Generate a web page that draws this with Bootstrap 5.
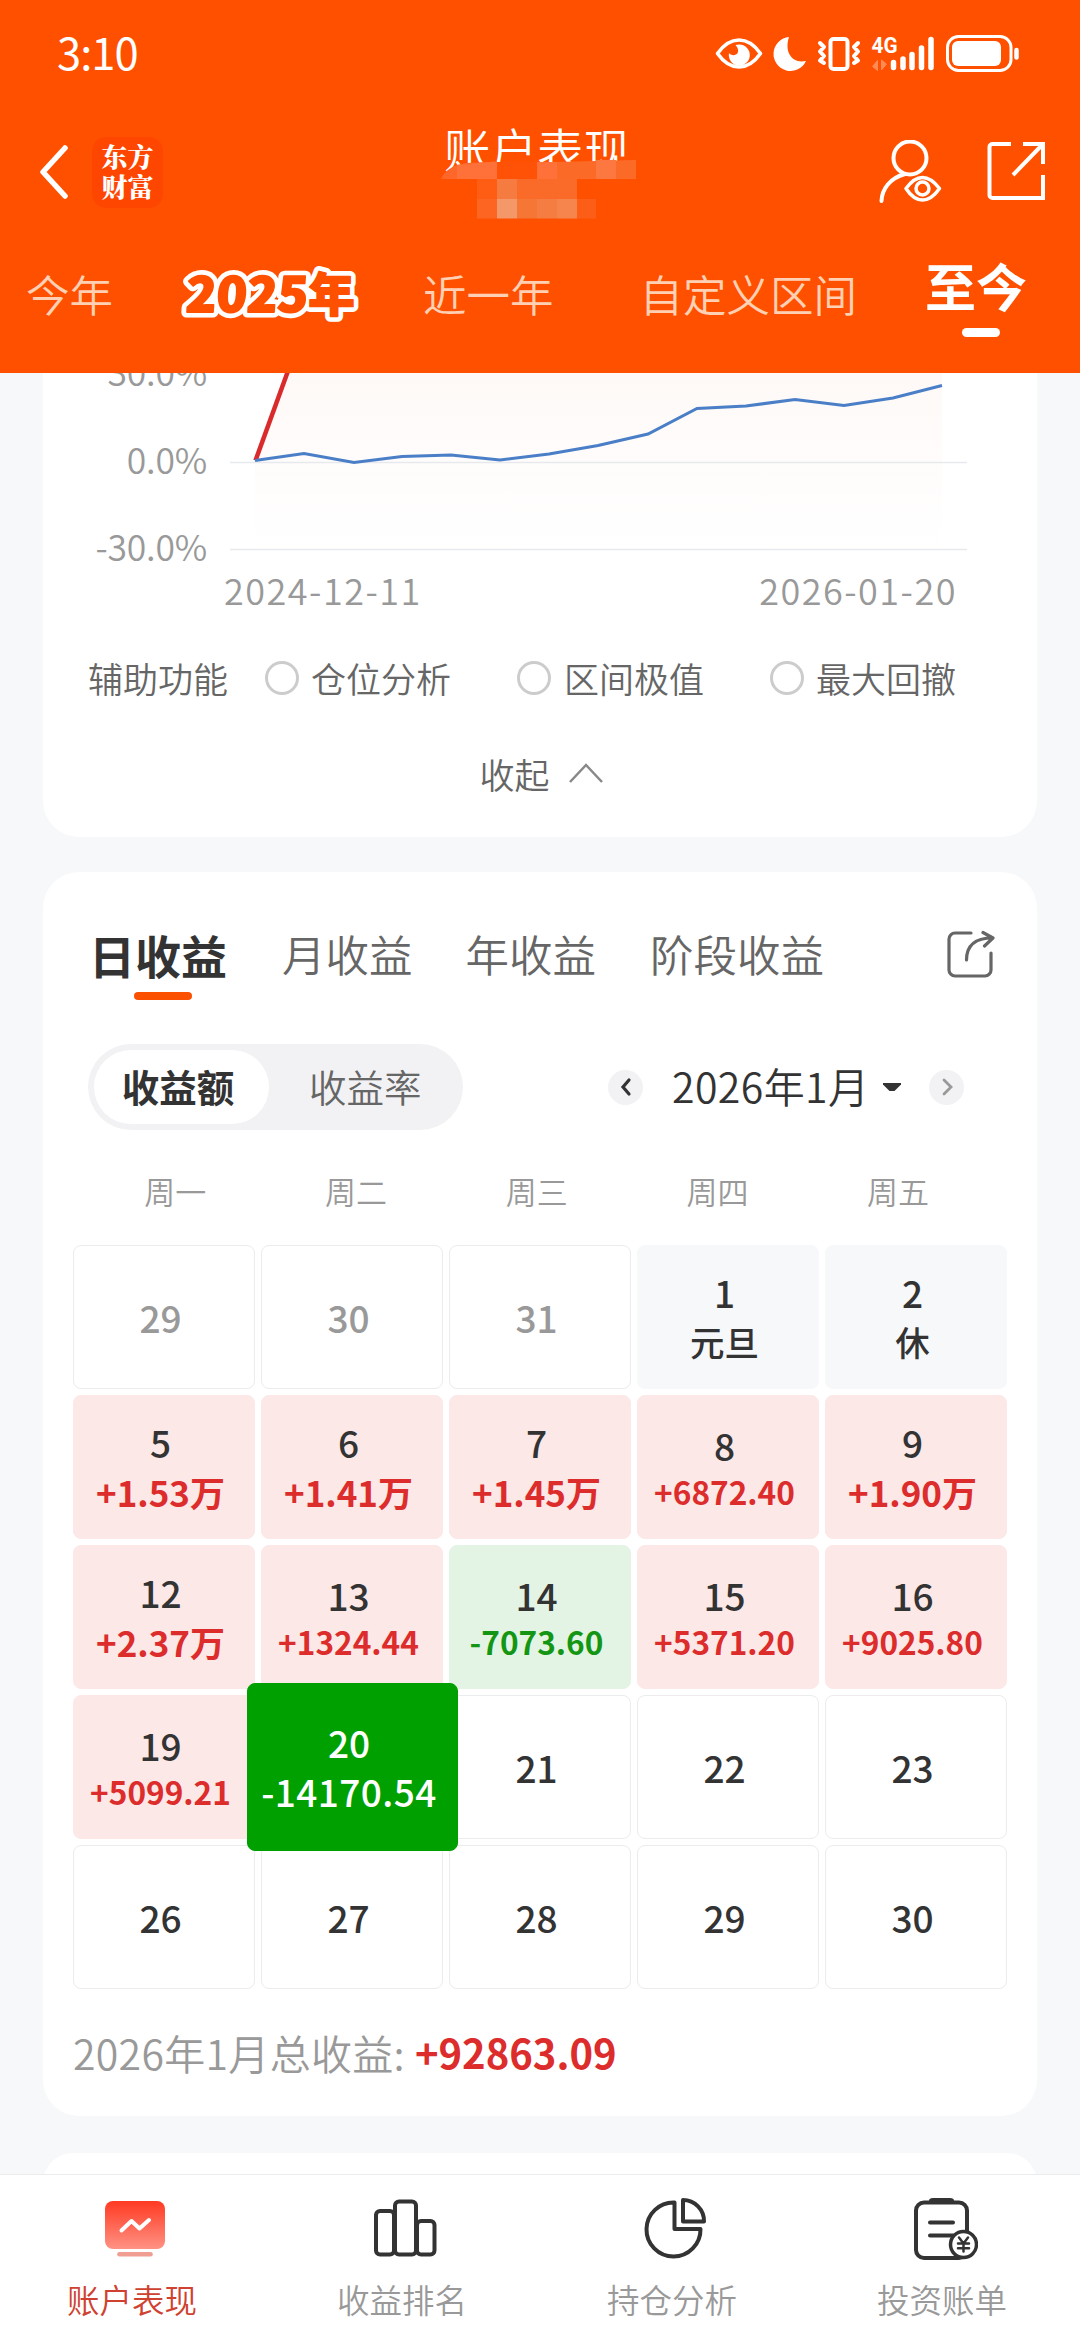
<!DOCTYPE html>
<html lang="zh-CN">
<head>
<meta charset="utf-8">
<meta name="viewport" content="width=device-width, initial-scale=1">
<title>账户表现</title>
<link rel="stylesheet" href="https://cdn.jsdelivr.net/npm/bootstrap@5.3.0/dist/css/bootstrap.min.css">
<script src="https://cdn.jsdelivr.net/npm/bootstrap@5.3.0/dist/js/bootstrap.bundle.min.js"></script>
<style>
html, body { height: 2340px; overflow: hidden; }
body { background: #f7f8fa; color: #333; font-family: "Noto Sans CJK SC", "Noto Sans", sans-serif; font-weight: 350; width: 1080px; }
svg { display: block; flex: none; }
.lh-tight { line-height: 1; white-space: nowrap; }
.app-head { height: 373px; background: #ff5000; z-index: 5; }
.status-row { height: 108px; padding: 0 61px 0 57px; }
.clock { font-size: 43.5px; font-weight: 400; letter-spacing: -1px; margin-bottom: 5px; }
.title-row { height: 128px; padding: 0 35px 0 40px; }
.brand-tile { width: 71px; height: 71px; border-radius: 14px; background: #ff4600; margin-left: 24px; color: #fff; font: 900 26px/30px "Noto Serif CJK SC", "Noto Sans CJK SC", sans-serif; padding-bottom: 2px; }
.page-title { font-size: 46.5px; margin-bottom: 48px; padding-left: 34px; }
.mosaic { left: 441px; top: 160px; }
.range-row { height: 118px; padding: 0 0 3px 26px; font-size: 43.5px; color: #ffd0b4; }
.outlined { overflow: visible; }
.range-now { font-size: 51px; font-weight: 700; color: #fff; margin-left: 68px; margin-bottom: 17px; }
.range-now::after { content: ""; width: 38px; height: 9px; border-radius: 5px; background: #fff; position: absolute; left: 37px; bottom: -26px; }
.panel { width: 994px; margin-left: 43px; background: #fff; border-radius: 36px; }
.chart-panel { height: 464px; border-radius: 0 0 36px 36px; overflow: hidden; }
.plot { height: 197px; }
.y-axis { width: 164px; font-size: 35.5px; color: #999; }
.y-axis span { display: block; height: 87.500px; line-height: 87.500px; letter-spacing: -.2px; }
.y-axis span:first-child { margin-top: -46px; }
.dates { height: 37px; padding: 0 80px 0 181px; font-size: 36px; color: #999; letter-spacing: 1.500px; }
.aux { margin-top: 46px; height: 50px; padding-left: 45px; font-size: 35px; color: #666; }
.aux span { padding-bottom: 2px; }
.ring { width: 34px; height: 34px; border: 3px solid #ccc; border-radius: 50%; }
.fold { margin-top: 45px; height: 50px; font-size: 35px; color: #666; padding-left: 3px; }
.calendar-panel { margin-top: 35px; height: 1244px; }
.kind-row { height: 130px; padding: 34px 42px 0 46px; font-size: 43.5px; color: #666; }
.kind-day { font-size: 46px; font-weight: 700; color: #333; width: 138px; }
.kind-day::after { content: ""; position: absolute; left: 45px; bottom: -23px; width: 58px; height: 8px; border-radius: 4px; background: #fa5000; }
.filter-row { margin-top: 42px; height: 86px; padding-left: 45px; }
.switch-pill { width: 375px; height: 86px; border-radius: 43px; background: #f2f2f4; padding: 6px; font-size: 37.5px; color: #666; }
.switch-pill span { padding-bottom: 3px; }
.switch-on { width: 175px; height: 74px; border-radius: 37px; background: #fff; color: #333; font-weight: 700; padding-right: 7px; }
.step { width: 35px; height: 35px; border-radius: 50%; background: #f2f2f4; }
.month-label { font-size: 41px; color: #333; width: 199px; margin-left: 29px; letter-spacing: .4px; padding-bottom: 3px; }
.week-row { height: 115px; padding: 6px 30px 0 42px; font-size: 31px; color: #999; }
.week-row span { width: 180.7px; text-align: center; }
.day-grid { display: grid; grid-template-columns: repeat(5, 182px); grid-auto-rows: 144px; gap: 6px; padding-left: 30px; }
.day { border: 1px solid #ececec; border-radius: 8px; font-size: 37px; font-weight: 500; line-height: 49px; padding: 0 7px 0 0; white-space: nowrap; }
.faded { color: #999; }
.rest { background: #f7f8fa; border-color: #f7f8fa; }
.rest b { font-size: 34.5px; font-weight: 500; }
.up { background: #fce8e7; border-color: #fce8e7; }
.down { background: #e3f4e4; border-color: #e3f4e4; }
.up b { color: #dc2c2c; font-size: 35px; font-weight: 700; }
.down b { color: #149614; }
.day .fine { font-size: 31.6px; line-height: 43px; font-weight: 700; }
.picked { margin: -12px -15px -12px -14px; background: #00a000; border-color: #00a000; color: #fff; z-index: 2; }
.picked b { font-weight: 500; letter-spacing: .4px; }
.total { height: 127px; padding: 0 0 1px 30px; font-size: 41px; color: #999; letter-spacing: .3px; }
.total b { font-weight: 700; font-size: 40px; letter-spacing: 0; color: #dc2c2c; margin-left: 10px; }
.next-panel { margin-top: 37px; height: 60px; }
.tab-bar { height: 166px; bottom: 0; left: 0; background: #fff; border-top: 1px solid #ececec; z-index: 5; font-size: 32.5px; color: #999; }
.tab-bar .tab { width: 270px; padding-top: 22px; }
.tab span { margin-top: 16px; padding-right: 6px; height: 40px; line-height: 40px; }
.tab-on { color: #cf4130; }
</style>
</head>
<body>
<header class="app-head position-relative">
  <div class="status-row d-flex align-items-center justify-content-between text-white">
    <div class="clock lh-tight">3:10</div>
    <svg class="outlined" width="306" height="40" viewBox="712 34 306 40" fill="none" stroke="#fff">
      <path d="M716.500 53.500Q726 40 738 40t21.500 13.500Q750 67 738 67t-21.500-13.500z" stroke-width="3.600" stroke-linejoin="round"/>
      <path d="M738 44.500a10.500 10.500 0 1 1-10 8.500c2 3 8 3 9-1 .8-3-1-5-2.500-7z" fill="#fff" stroke="none"/>
      <path d="M788 37a17 17 0 1 0 17 24c-14 3-22-9-17-24z" fill="#fff" stroke="none"/>
      <rect x="829.500" y="39" width="17" height="30" rx="3" stroke-width="4"/>
      <path d="M819 43l4 4-4 4.500 4 4.500-4 4.500 4 2.500M857 43l-4 4 4 4.500-4 4.500 4 4.500-4 2.500" stroke-width="4" stroke-linejoin="round" stroke-linecap="round"/>
      <text x="870.500" y="53" font-family="Roboto, sans-serif" font-size="22.500" font-weight="700" fill="#fff" stroke="none" textLength="26" lengthAdjust="spacingAndGlyphs">4G</text>
      <path d="M876.500 70.500v-10l-5 6zM880.500 60v10l5-6z" fill="#ff8a55" stroke="#ff8a55" stroke-width="1"/>
      <path d="M892.500 62.500v5M902 59v8.500M911 54.500v13M920.500 48v19.500M930 39.500v28" stroke-width="5.500" stroke-linecap="round"/>
      <rect x="946.500" y="36.500" width="63.500" height="34" rx="11" stroke-width="3"/>
      <rect x="951" y="41" width="49" height="25" rx="6" fill="#fff" stroke="none"/>
      <path d="M1015.500 50v7.500" stroke-width="4.500" stroke-linecap="round"/>
    </svg>
  </div>
  <div class="title-row d-flex align-items-center justify-content-between text-white">
    <div class="d-flex align-items-center">
      <svg width="28" height="54" viewBox="0 0 28 54" fill="none" stroke="#fff" stroke-width="5.500" stroke-linecap="round" stroke-linejoin="round"><path d="M25 3L3 27l22 24"/></svg>
      <div class="brand-tile text-center d-flex flex-column justify-content-center"><span>东方</span><span>财富</span></div>
    </div>
    <div class="page-title lh-tight">账户表现</div>
    <svg width="168" height="64" viewBox="876 140 168 64" fill="none" stroke="#fff" stroke-width="4">
      <circle cx="909" cy="158" r="16.500"/>
      <path d="M904 174c-15 4-23 15-23.500 27" stroke-linecap="round"/>
      <path d="M905 188.500q8-11 16.500-11t17 11q-8 11.500-17 11.500t-16.500-11.500z" stroke-width="3.500" stroke-linejoin="round"/>
      <circle cx="921.500" cy="188.500" r="6.500" stroke-width="3.500"/>
      <path d="M1010 144h-18.500a3 3 0 0 0-3 3v48a3 3 0 0 0 3 3H1042v-23M1022 144h20v20M1042 144l-30 31"/>
    </svg>
  </div>
  <svg class="mosaic position-absolute" width="196" height="62" viewBox="441 160 196 62">
    <path d="M441 179c4-9 12-14 25-16l31-1.500v17.500z" fill="#ff662a"/>
    <path d="M457 165l40-3.500v17.500h-40z" fill="#ff7138"/>
    <rect x="497" y="162" width="40" height="17" fill="#ff5206"/>
    <path d="M537 162.500l99-2.500v19h-99z" fill="#fc6a28"/>
    <rect x="537" y="162" width="20" height="17" fill="#ff7138"/><rect x="596" y="160" width="20" height="19" fill="#fc7840"/>
    <rect x="477" y="179" width="20" height="20" fill="#ff5c14"/><rect x="497" y="179" width="20" height="20" fill="#f57b40"/><rect x="517" y="179" width="60" height="20" fill="#fa6a28"/>
    <rect x="477" y="199" width="20" height="19.500" fill="#fc6622"/><rect x="497" y="199" width="20" height="19.500" fill="#f49769"/><rect x="517" y="199" width="20" height="19.500" fill="#f67636"/><rect x="537" y="199" width="20" height="19.500" fill="#f57d41"/><rect x="557" y="199" width="20" height="19.500" fill="#f5854d"/><rect x="577" y="199" width="19" height="19.500" fill="#fc5e18"/>
  </svg>
  <nav class="range-row d-flex align-items-center lh-tight">
    <span>今年</span>
    <svg class="outlined" style="margin-left:67px" width="180" height="60" viewBox="180 264 180 60" font-family="Noto Sans CJK SC, sans-serif" font-weight="900" font-size="48" stroke-linejoin="round">
      <g fill="#fff" stroke="#fff" stroke-width="11"><text transform="translate(185 312) skewX(-4)" textLength="122" lengthAdjust="spacingAndGlyphs">2025</text><text x="308.500" y="311" font-size="46">年</text></g>
      <g fill="#ff5000" stroke="#ff5000" stroke-width="1.800" aria-hidden="true"><text transform="translate(185 312) skewX(-4)" textLength="122" lengthAdjust="spacingAndGlyphs">2025</text><text x="308.500" y="311" font-size="46">年</text></g>
    </svg>
    <span style="margin-left:63px">近一年</span>
    <span style="margin-left:86px">自定义区间</span>
    <span class="range-now position-relative">至今</span>
  </nav>
</header>

<main>
  <section class="panel chart-panel">
    <div class="plot d-flex">
      <div class="y-axis text-end"><span>30.0%</span><span>0.0%</span><span>-30.0%</span></div>
      <svg width="794" height="197" viewBox="207 373 794 197" fill="none">
        <defs><linearGradient id="fade" x1="0" y1="0" x2="0" y2="1"><stop offset="0" stop-color="#fef9f7"/><stop offset="1" stop-color="#fff"/></linearGradient></defs>
        <path d="M255 460L288 373H942V549H255z" fill="url(#fade)"/>
        <path d="M230 462.500H967M230 549.500H967" stroke="#e8e9ed" stroke-width="1.500"/>
        <path d="M255.500 460.500L288 371" stroke="#d92b2b" stroke-width="4.500"/>
        <path d="M255 460.500L304 453.500 354 462.500 402 456.500 451 455 500 460 549 454 598 445.500 648 434 697 408.500 746 406 795 399.500 844 405.500 893 398 942 385.500" stroke="#4a7fc8" stroke-width="3"/>
      </svg>
    </div>
    <div class="dates d-flex align-items-center justify-content-between lh-tight"><span>2024-12-11</span><span>2026-01-20</span></div>
    <div class="aux d-flex align-items-center lh-tight">
      <span>辅助功能</span>
      <i class="ring" style="margin-left:37px"></i><span style="margin-left:12px">仓位分析</span>
      <i class="ring" style="margin-left:66px"></i><span style="margin-left:13px">区间极值</span>
      <i class="ring" style="margin-left:66px"></i><span style="margin-left:12px">最大回撤</span>
    </div>
    <div class="fold d-flex align-items-center justify-content-center lh-tight"><span>收起</span>
      <svg style="margin-left:18px" width="36" height="22" viewBox="0 0 36 22" fill="none" stroke="#888" stroke-width="2.500"><path d="M2 20L18 3l16 17"/></svg>
    </div>
  </section>

  <section class="panel calendar-panel">
    <div class="kind-row d-flex align-items-center lh-tight">
      <span class="kind-day position-relative">日收益</span>
      <span style="margin-left:55px">月收益</span>
      <span style="margin-left:53px">年收益</span>
      <span style="margin-left:54px">阶段收益</span>
      <svg class="ms-auto" width="48" height="48" viewBox="945 931 48 48" fill="none" stroke="#666" stroke-width="3.200" stroke-linecap="round" stroke-linejoin="round"><path d="M969 934h-16a6 6 0 0 0-6 6v31a6 6 0 0 0 6 6h30a6 6 0 0 0 6-6v-17M964.500 961c0-14 8-22 26-22M981 933.500l10 5.500-8.500 8"/></svg>
    </div>
    <div class="filter-row d-flex align-items-center lh-tight">
      <div class="switch-pill d-flex align-items-center">
        <div class="switch-on d-flex align-items-center justify-content-center"><span>收益额</span></div>
        <span style="margin-left:40px">收益率</span>
      </div>
      <div class="step d-flex align-items-center justify-content-center" style="margin-left:145px"><svg width="12" height="20" viewBox="0 0 12 20" fill="none" stroke="#333" stroke-width="3.200" stroke-linecap="round"><path d="M9 3L3 10l6 7"/></svg></div>
      <span class="month-label">2026年1月</span>
      <svg style="margin-left:12px" width="18" height="8" viewBox="0 0 18 8"><path d="M0 0h18v1.500L11.500 8h-5L0 1.500z" fill="#333"/></svg>
      <div class="step d-flex align-items-center justify-content-center" style="margin-left:28px"><svg width="12" height="20" viewBox="0 0 12 20" fill="none" stroke="#999" stroke-width="2.800" stroke-linecap="round"><path d="M3 3l7 7-7 7"/></svg></div>
    </div>
    <div class="week-row d-flex align-items-center lh-tight"><span>周一</span><span>周二</span><span>周三</span><span>周四</span><span>周五</span></div>
    <div class="day-grid">
      <div class="day faded d-flex flex-column align-items-center justify-content-center">29</div>
      <div class="day faded d-flex flex-column align-items-center justify-content-center">30</div>
      <div class="day faded d-flex flex-column align-items-center justify-content-center">31</div>
      <div class="day rest d-flex flex-column align-items-center justify-content-center">1<b>元旦</b></div>
      <div class="day rest d-flex flex-column align-items-center justify-content-center">2<b>休</b></div>
      <div class="day up d-flex flex-column align-items-center justify-content-center">5<b>+1.53万</b></div>
      <div class="day up d-flex flex-column align-items-center justify-content-center">6<b>+1.41万</b></div>
      <div class="day up d-flex flex-column align-items-center justify-content-center">7<b>+1.45万</b></div>
      <div class="day up d-flex flex-column align-items-center justify-content-center">8<b class="fine">+6872.40</b></div>
      <div class="day up d-flex flex-column align-items-center justify-content-center">9<b>+1.90万</b></div>
      <div class="day up d-flex flex-column align-items-center justify-content-center">12<b>+2.37万</b></div>
      <div class="day up d-flex flex-column align-items-center justify-content-center">13<b class="fine">+1324.44</b></div>
      <div class="day down d-flex flex-column align-items-center justify-content-center">14<b class="fine">-7073.60</b></div>
      <div class="day up d-flex flex-column align-items-center justify-content-center">15<b class="fine">+5371.20</b></div>
      <div class="day up d-flex flex-column align-items-center justify-content-center">16<b class="fine">+9025.80</b></div>
      <div class="day up d-flex flex-column align-items-center justify-content-center">19<b class="fine">+5099.21</b></div>
      <div class="day picked position-relative d-flex flex-column align-items-center justify-content-center">20<b>-14170.54</b></div>
      <div class="day d-flex flex-column align-items-center justify-content-center">21</div>
      <div class="day d-flex flex-column align-items-center justify-content-center">22</div>
      <div class="day d-flex flex-column align-items-center justify-content-center">23</div>
      <div class="day d-flex flex-column align-items-center justify-content-center">26</div>
      <div class="day d-flex flex-column align-items-center justify-content-center">27</div>
      <div class="day d-flex flex-column align-items-center justify-content-center">28</div>
      <div class="day d-flex flex-column align-items-center justify-content-center">29</div>
      <div class="day d-flex flex-column align-items-center justify-content-center">30</div>
    </div>
    <div class="total d-flex align-items-center lh-tight"><span>2026年1月总收益:</span><b>+92863.09</b></div>
  </section>
  <section class="panel next-panel"></section>
</main>

<nav class="tab-bar position-fixed w-100 d-flex lh-tight">
  <div class="tab tab-on d-flex flex-column align-items-center">
    <svg width="66" height="66" viewBox="102 2197 66 66"><defs><linearGradient id="tile" x1="0" y1="0" x2="0" y2="1"><stop offset="0" stop-color="#ff3a22"/><stop offset="1" stop-color="#ff9284"/></linearGradient></defs><rect x="105" y="2201" width="60" height="48" rx="8" fill="url(#tile)"/><path d="M121.500 2230.500l10-9.500 8 7.500 9.500-8.500" fill="none" stroke="#fff" stroke-width="4" stroke-linecap="round" stroke-linejoin="round"/><path d="M119.500 2254.200h31" stroke="#f09e92" stroke-width="4.600" stroke-linecap="round"/></svg>
    <span>账户表现</span>
  </div>
  <div class="tab d-flex flex-column align-items-center">
    <svg width="66" height="66" viewBox="372 2197 66 66" fill="none" stroke="#333" stroke-width="4"><rect x="376" y="2211" width="18" height="43.500" rx="4"/><rect x="395" y="2201.500" width="21" height="53" rx="4"/><rect x="417" y="2221" width="17.500" height="33.500" rx="4"/></svg>
    <span>收益排名</span>
  </div>
  <div class="tab d-flex flex-column align-items-center">
    <svg width="66" height="66" viewBox="641 2197 66 66" fill="none" stroke="#333" stroke-width="4" stroke-linejoin="round"><path d="M673.500 2202.500a27 27 0 1 0 26 26.500h-26z"/><path d="M682 2200a21 21 0 0 1 21 21.500h-21z"/></svg>
    <span>持仓分析</span>
  </div>
  <div class="tab d-flex flex-column align-items-center">
    <svg width="66" height="66" viewBox="911 2197 66 66" fill="none" stroke="#333" stroke-width="4" stroke-linecap="round"><rect x="915" y="2202.500" width="51" height="55.500" rx="8"/><path d="M928 2200.500q0-2.500 4-2.500h17q4 0 4 2.500v3h-25z" fill="#333" stroke="none"/><path d="M929 2222.500h23M929 2235.500h23"/><circle cx="962.500" cy="2244.500" r="13" fill="#fff" stroke-width="3.500"/><path d="M958 2237.500l4.500 6 4.500-6M962.500 2243.500v8M957 2243.500h11M957 2248.300h11" stroke-width="2.500"/></svg>
    <span>投资账单</span>
  </div>
</nav>
</body>
</html>
